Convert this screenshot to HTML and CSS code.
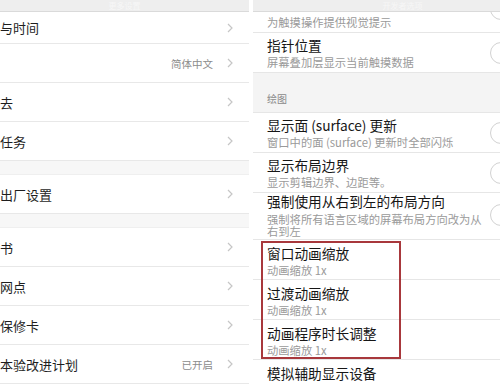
FILE: index.html
```html
<!DOCTYPE html>
<html lang="zh">
<head>
    <meta charset="UTF-8">
    <meta name="viewport" content="width=device-width, initial-scale=1.0">
    <title>设置</title>
    <link rel="stylesheet" href="styles.css">
</head>
<body>

    <div class="screens">
        <div class="panel left">
            <div class="topbar"><span>更多设置</span></div>
            <div class="item first"><span class="label">与时间</span><svg class="chev" width="6" height="10" viewBox="0 0 6 10"><path d="M1 1l4 4-4 4"/></svg></div>
            <div class="item"><span class="label"></span><span class="value">简体中文</span><svg class="chev" width="6" height="10" viewBox="0 0 6 10"><path d="M1 1l4 4-4 4"/></svg></div>
            <div class="item"><span class="label">去</span><svg class="chev" width="6" height="10" viewBox="0 0 6 10"><path d="M1 1l4 4-4 4"/></svg></div>
            <div class="item"><span class="label">任务</span><svg class="chev" width="6" height="10" viewBox="0 0 6 10"><path d="M1 1l4 4-4 4"/></svg></div>
            <div class="gap"></div>
            <div class="item"><span class="label">出厂设置</span><svg class="chev" width="6" height="10" viewBox="0 0 6 10"><path d="M1 1l4 4-4 4"/></svg></div>
            <div class="gap"></div>
            <div class="item"><span class="label">书</span><svg class="chev" width="6" height="10" viewBox="0 0 6 10"><path d="M1 1l4 4-4 4"/></svg></div>
            <div class="item"><span class="label">网点</span><svg class="chev" width="6" height="10" viewBox="0 0 6 10"><path d="M1 1l4 4-4 4"/></svg></div>
            <div class="item"><span class="label">保修卡</span><svg class="chev" width="6" height="10" viewBox="0 0 6 10"><path d="M1 1l4 4-4 4"/></svg></div>
            <div class="item"><span class="label">本验改进计划</span><span class="value">已开启</span><svg class="chev" width="6" height="10" viewBox="0 0 6 10"><path d="M1 1l4 4-4 4"/></svg></div>
        </div>

        <div class="panel right">
            <div class="topbar shifted"><span>开发者选项</span></div>
            <div class="set partial">
                <div class="text"><div class="sub">为触摸操作提供视觉提示</div></div>
                <div class="toggle"></div>
            </div>
            <div class="set">
                <div class="text">
                    <div class="title">指针位置</div>
                    <div class="sub">屏幕叠加层显示当前触摸数据</div>
                </div>
                <div class="toggle"></div>
            </div>
            <div class="group-label">绘图</div>
            <div class="set">
                <div class="text">
                    <div class="title">显示面 (surface) 更新</div>
                    <div class="sub">窗口中的面 (surface) 更新时全部闪烁</div>
                </div>
                <div class="toggle"></div>
            </div>
            <div class="set">
                <div class="text">
                    <div class="title">显示布局边界</div>
                    <div class="sub">显示剪辑边界、边距等。</div>
                </div>
                <div class="toggle"></div>
            </div>
            <div class="set tight">
                <div class="text">
                    <div class="title">强制使用从右到左的布局方向</div>
                    <div class="sub">强制将所有语言区域的屏幕布局方向改为从右到左</div>
                </div>
                <div class="toggle"></div>
            </div>
            <div class="marked">
                <div class="set">
                    <div class="text">
                        <div class="title">窗口动画缩放</div>
                        <div class="sub">动画缩放 1x</div>
                    </div>
                </div>
                <div class="set">
                    <div class="text">
                        <div class="title">过渡动画缩放</div>
                        <div class="sub">动画缩放 1x</div>
                    </div>
                </div>
                <div class="set">
                    <div class="text">
                        <div class="title">动画程序时长调整</div>
                        <div class="sub">动画缩放 1x</div>
                    </div>
                </div>
                <div class="box"></div>
            </div>
            <div class="set last">
                <div class="text">
                    <div class="title">模拟辅助显示设备</div>
                </div>
            </div>
        </div>
    </div>

</body>
</html>
```

FILE: styles.css
```css
body {
    margin: 0;
    width: 500px;
    height: 384px;
    overflow: hidden;
    background: #fff;
    font-family: "Noto Sans CJK SC", "Noto Sans", sans-serif;
}

.screens {
    display: flex;
    gap: 4px;
    height: 384px;
}

.panel {
    flex-shrink: 0;
    background: #fff;
    overflow: hidden;
}

.left {
    width: 249px;
}

.right {
    width: 247px;
}

.topbar {
    height: 11px;
    background: #eeeeee;
    border-bottom: 1px solid #dadada;
    display: flex;
    justify-content: center;
    align-items: center;
}

.topbar span {
    font-size: 8px;
    line-height: 10px;
    color: #f7f7f7;
}

.topbar.shifted {
    padding-left: 52px;
}

/* left screen */

.item {
    height: 38px;
    display: flex;
    align-items: center;
    padding-right: 16px;
    border-bottom: 1px solid #e8e8e8;
    background: #fff;
}

.item.first {
    height: 31px;
}

.label {
    flex: 1;
    font-size: 13px;
    color: #1e1e1e;
}

.value {
    font-size: 10.5px;
    color: #8c8c8c;
    margin-right: 14px;
}

.chev path {
    fill: none;
    stroke: #c6c6c6;
    stroke-width: 1.2;
}

.gap {
    height: 13px;
    background: #f7f7f7;
    border-bottom: 1px solid #efefef;
}

/* right screen */

.set {
    display: flex;
    align-items: center;
    padding: 3px 0 2px 14px;
    border-bottom: 1px solid #e6e6e6;
}

.set .text {
    flex: 1;
    min-width: 0;
}

.title {
    font-size: 13.7px;
    line-height: 19px;
    color: #161616;
}

.sub {
    font-size: 11.3px;
    line-height: 15px;
    color: #9a9a9a;
}

.toggle {
    flex-shrink: 0;
    width: 50px;
    height: 22px;
    box-sizing: border-box;
    margin-left: 6px;
    margin-right: -40px;
    border: 1px solid #d2d2d2;
    border-radius: 11px;
    background: #fff;
}

.set.partial {
    height: 20px;
    padding: 0 0 0 14px;
    overflow: hidden;
}

.set.partial .toggle {
    align-self: flex-start;
    margin-top: -14px;
}

.group-label {
    height: 40px;
    box-sizing: border-box;
    padding: 19px 0 7px 14px;
    background: #f4f4f4;
    border-bottom: 1px solid #e6e6e6;
    font-size: 10px;
    line-height: 14px;
    color: #8a8a8a;
}

.set.tight {
    padding-top: 0;
}

.tight .title {
    line-height: 17px;
}

.tight .sub {
    margin-top: 3px;
    line-height: 12px;
}

.marked {
    position: relative;
}

.marked .set {
    padding: 4px 0 1px 14px;
}

.box {
    position: absolute;
    left: 8px;
    top: 1px;
    width: 140px;
    height: 118px;
    box-sizing: border-box;
    border: 2px solid #a8383c;
}

.set.last {
    padding-top: 4px;
    border-bottom: none;
}
```
